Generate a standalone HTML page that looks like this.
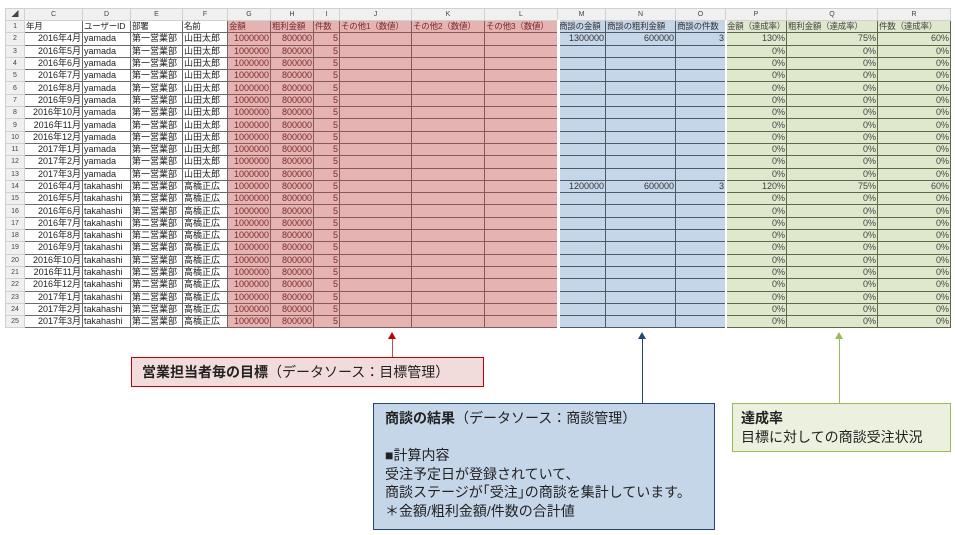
<!DOCTYPE html>
<html><head><meta charset="utf-8"><style>
body{margin:0;width:955px;height:535px;background:#fff;position:relative;overflow:hidden;font-family:"Liberation Sans","Noto Sans CJK JP",sans-serif;}
table{position:absolute;left:5px;top:8px;width:945px;border-collapse:collapse;table-layout:fixed;font-size:9px;}
td{height:11.3px;padding:0 1px;border:1px solid #6a6a6a;white-space:nowrap;overflow:hidden;line-height:11px;color:#222;}
tr.h td{background:#f0f0f0;color:#444;font-size:7px;text-align:center;border-color:#d0d0d0;height:10px;}
tr.t td{font-size:8.5px;letter-spacing:-0.2px}
td.n{background:#f0f0f0;color:#444;font-size:7px !important;text-align:center;border-color:#d0d0d0;}
.r{text-align:right}
.g{background:#e6b3b3;color:#7a2a2a;border-color:#8a5a5a}
.b{background:#c6d6e9;color:#333;border-color:#4a5a6a}
.v{background:#dfe8cd;color:#444;border-color:#5a6a4a}
.box{position:absolute;box-sizing:border-box;font-size:14px;color:#222;}
.ar{position:absolute;width:1px;}
.tri{position:absolute;width:0;height:0;border-left:4px solid transparent;border-right:4px solid transparent;}
</style></head><body>
<table>
<colgroup><col style="width:19px"><col style="width:58px"><col style="width:48px"><col style="width:52px"><col style="width:45px"><col style="width:43px"><col style="width:43px"><col style="width:26px"><col style="width:72px"><col style="width:73px"><col style="width:73px"><col style="width:48px"><col style="width:70px"><col style="width:50px"><col style="width:61px"><col style="width:91px"><col style="width:73px"></colgroup>
<tr class="h"><td>◢</td><td>C</td><td>D</td><td>E</td><td>F</td><td>G</td><td>H</td><td>I</td><td>J</td><td>K</td><td>L</td><td>M</td><td>N</td><td>O</td><td>P</td><td>Q</td><td>R</td></tr>
<tr class="t"><td class="n">1</td><td>年月</td><td>ユーザーID</td><td>部署</td><td>名前</td><td class="g">金額</td><td class="g">粗利金額</td><td class="g">件数</td><td class="g">その他1（数値）</td><td class="g">その他2（数値）</td><td class="g">その他3（数値）</td><td class="b">商談の金額</td><td class="b">商談の粗利金額</td><td class="b">商談の件数</td><td class="v">金額（達成率）</td><td class="v">粗利金額（達成率）</td><td class="v">件数（達成率）</td></tr>
<tr><td class="n">2</td><td class="r">2016年4月</td><td>yamada</td><td>第一営業部</td><td>山田太郎</td><td class="g r">1000000</td><td class="g r">800000</td><td class="g r">5</td><td class="g"></td><td class="g"></td><td class="g"></td><td class="b r">1300000</td><td class="b r">600000</td><td class="b r">3</td><td class="v r">130%</td><td class="v r">75%</td><td class="v r">60%</td></tr>
<tr><td class="n">3</td><td class="r">2016年5月</td><td>yamada</td><td>第一営業部</td><td>山田太郎</td><td class="g r">1000000</td><td class="g r">800000</td><td class="g r">5</td><td class="g"></td><td class="g"></td><td class="g"></td><td class="b"></td><td class="b"></td><td class="b"></td><td class="v r">0%</td><td class="v r">0%</td><td class="v r">0%</td></tr>
<tr><td class="n">4</td><td class="r">2016年6月</td><td>yamada</td><td>第一営業部</td><td>山田太郎</td><td class="g r">1000000</td><td class="g r">800000</td><td class="g r">5</td><td class="g"></td><td class="g"></td><td class="g"></td><td class="b"></td><td class="b"></td><td class="b"></td><td class="v r">0%</td><td class="v r">0%</td><td class="v r">0%</td></tr>
<tr><td class="n">5</td><td class="r">2016年7月</td><td>yamada</td><td>第一営業部</td><td>山田太郎</td><td class="g r">1000000</td><td class="g r">800000</td><td class="g r">5</td><td class="g"></td><td class="g"></td><td class="g"></td><td class="b"></td><td class="b"></td><td class="b"></td><td class="v r">0%</td><td class="v r">0%</td><td class="v r">0%</td></tr>
<tr><td class="n">6</td><td class="r">2016年8月</td><td>yamada</td><td>第一営業部</td><td>山田太郎</td><td class="g r">1000000</td><td class="g r">800000</td><td class="g r">5</td><td class="g"></td><td class="g"></td><td class="g"></td><td class="b"></td><td class="b"></td><td class="b"></td><td class="v r">0%</td><td class="v r">0%</td><td class="v r">0%</td></tr>
<tr><td class="n">7</td><td class="r">2016年9月</td><td>yamada</td><td>第一営業部</td><td>山田太郎</td><td class="g r">1000000</td><td class="g r">800000</td><td class="g r">5</td><td class="g"></td><td class="g"></td><td class="g"></td><td class="b"></td><td class="b"></td><td class="b"></td><td class="v r">0%</td><td class="v r">0%</td><td class="v r">0%</td></tr>
<tr><td class="n">8</td><td class="r">2016年10月</td><td>yamada</td><td>第一営業部</td><td>山田太郎</td><td class="g r">1000000</td><td class="g r">800000</td><td class="g r">5</td><td class="g"></td><td class="g"></td><td class="g"></td><td class="b"></td><td class="b"></td><td class="b"></td><td class="v r">0%</td><td class="v r">0%</td><td class="v r">0%</td></tr>
<tr><td class="n">9</td><td class="r">2016年11月</td><td>yamada</td><td>第一営業部</td><td>山田太郎</td><td class="g r">1000000</td><td class="g r">800000</td><td class="g r">5</td><td class="g"></td><td class="g"></td><td class="g"></td><td class="b"></td><td class="b"></td><td class="b"></td><td class="v r">0%</td><td class="v r">0%</td><td class="v r">0%</td></tr>
<tr><td class="n">10</td><td class="r">2016年12月</td><td>yamada</td><td>第一営業部</td><td>山田太郎</td><td class="g r">1000000</td><td class="g r">800000</td><td class="g r">5</td><td class="g"></td><td class="g"></td><td class="g"></td><td class="b"></td><td class="b"></td><td class="b"></td><td class="v r">0%</td><td class="v r">0%</td><td class="v r">0%</td></tr>
<tr><td class="n">11</td><td class="r">2017年1月</td><td>yamada</td><td>第一営業部</td><td>山田太郎</td><td class="g r">1000000</td><td class="g r">800000</td><td class="g r">5</td><td class="g"></td><td class="g"></td><td class="g"></td><td class="b"></td><td class="b"></td><td class="b"></td><td class="v r">0%</td><td class="v r">0%</td><td class="v r">0%</td></tr>
<tr><td class="n">12</td><td class="r">2017年2月</td><td>yamada</td><td>第一営業部</td><td>山田太郎</td><td class="g r">1000000</td><td class="g r">800000</td><td class="g r">5</td><td class="g"></td><td class="g"></td><td class="g"></td><td class="b"></td><td class="b"></td><td class="b"></td><td class="v r">0%</td><td class="v r">0%</td><td class="v r">0%</td></tr>
<tr><td class="n">13</td><td class="r">2017年3月</td><td>yamada</td><td>第一営業部</td><td>山田太郎</td><td class="g r">1000000</td><td class="g r">800000</td><td class="g r">5</td><td class="g"></td><td class="g"></td><td class="g"></td><td class="b"></td><td class="b"></td><td class="b"></td><td class="v r">0%</td><td class="v r">0%</td><td class="v r">0%</td></tr>
<tr><td class="n">14</td><td class="r">2016年4月</td><td>takahashi</td><td>第二営業部</td><td>高橋正広</td><td class="g r">1000000</td><td class="g r">800000</td><td class="g r">5</td><td class="g"></td><td class="g"></td><td class="g"></td><td class="b r">1200000</td><td class="b r">600000</td><td class="b r">3</td><td class="v r">120%</td><td class="v r">75%</td><td class="v r">60%</td></tr>
<tr><td class="n">15</td><td class="r">2016年5月</td><td>takahashi</td><td>第二営業部</td><td>高橋正広</td><td class="g r">1000000</td><td class="g r">800000</td><td class="g r">5</td><td class="g"></td><td class="g"></td><td class="g"></td><td class="b"></td><td class="b"></td><td class="b"></td><td class="v r">0%</td><td class="v r">0%</td><td class="v r">0%</td></tr>
<tr><td class="n">16</td><td class="r">2016年6月</td><td>takahashi</td><td>第二営業部</td><td>高橋正広</td><td class="g r">1000000</td><td class="g r">800000</td><td class="g r">5</td><td class="g"></td><td class="g"></td><td class="g"></td><td class="b"></td><td class="b"></td><td class="b"></td><td class="v r">0%</td><td class="v r">0%</td><td class="v r">0%</td></tr>
<tr><td class="n">17</td><td class="r">2016年7月</td><td>takahashi</td><td>第二営業部</td><td>高橋正広</td><td class="g r">1000000</td><td class="g r">800000</td><td class="g r">5</td><td class="g"></td><td class="g"></td><td class="g"></td><td class="b"></td><td class="b"></td><td class="b"></td><td class="v r">0%</td><td class="v r">0%</td><td class="v r">0%</td></tr>
<tr><td class="n">18</td><td class="r">2016年8月</td><td>takahashi</td><td>第二営業部</td><td>高橋正広</td><td class="g r">1000000</td><td class="g r">800000</td><td class="g r">5</td><td class="g"></td><td class="g"></td><td class="g"></td><td class="b"></td><td class="b"></td><td class="b"></td><td class="v r">0%</td><td class="v r">0%</td><td class="v r">0%</td></tr>
<tr><td class="n">19</td><td class="r">2016年9月</td><td>takahashi</td><td>第二営業部</td><td>高橋正広</td><td class="g r">1000000</td><td class="g r">800000</td><td class="g r">5</td><td class="g"></td><td class="g"></td><td class="g"></td><td class="b"></td><td class="b"></td><td class="b"></td><td class="v r">0%</td><td class="v r">0%</td><td class="v r">0%</td></tr>
<tr><td class="n">20</td><td class="r">2016年10月</td><td>takahashi</td><td>第二営業部</td><td>高橋正広</td><td class="g r">1000000</td><td class="g r">800000</td><td class="g r">5</td><td class="g"></td><td class="g"></td><td class="g"></td><td class="b"></td><td class="b"></td><td class="b"></td><td class="v r">0%</td><td class="v r">0%</td><td class="v r">0%</td></tr>
<tr><td class="n">21</td><td class="r">2016年11月</td><td>takahashi</td><td>第二営業部</td><td>高橋正広</td><td class="g r">1000000</td><td class="g r">800000</td><td class="g r">5</td><td class="g"></td><td class="g"></td><td class="g"></td><td class="b"></td><td class="b"></td><td class="b"></td><td class="v r">0%</td><td class="v r">0%</td><td class="v r">0%</td></tr>
<tr><td class="n">22</td><td class="r">2016年12月</td><td>takahashi</td><td>第二営業部</td><td>高橋正広</td><td class="g r">1000000</td><td class="g r">800000</td><td class="g r">5</td><td class="g"></td><td class="g"></td><td class="g"></td><td class="b"></td><td class="b"></td><td class="b"></td><td class="v r">0%</td><td class="v r">0%</td><td class="v r">0%</td></tr>
<tr><td class="n">23</td><td class="r">2017年1月</td><td>takahashi</td><td>第二営業部</td><td>高橋正広</td><td class="g r">1000000</td><td class="g r">800000</td><td class="g r">5</td><td class="g"></td><td class="g"></td><td class="g"></td><td class="b"></td><td class="b"></td><td class="b"></td><td class="v r">0%</td><td class="v r">0%</td><td class="v r">0%</td></tr>
<tr><td class="n">24</td><td class="r">2017年2月</td><td>takahashi</td><td>第二営業部</td><td>高橋正広</td><td class="g r">1000000</td><td class="g r">800000</td><td class="g r">5</td><td class="g"></td><td class="g"></td><td class="g"></td><td class="b"></td><td class="b"></td><td class="b"></td><td class="v r">0%</td><td class="v r">0%</td><td class="v r">0%</td></tr>
<tr><td class="n">25</td><td class="r">2017年3月</td><td>takahashi</td><td>第二営業部</td><td>高橋正広</td><td class="g r">1000000</td><td class="g r">800000</td><td class="g r">5</td><td class="g"></td><td class="g"></td><td class="g"></td><td class="b"></td><td class="b"></td><td class="b"></td><td class="v r">0%</td><td class="v r">0%</td><td class="v r">0%</td></tr>
</table>
<div style="position:absolute;left:557px;top:20px;width:3px;height:309px;background:#fff"></div>
<div style="position:absolute;left:725px;top:20px;width:2px;height:309px;background:#fff"></div>

<div class="ar" style="left:392px;top:338px;height:19px;background:#c0504d"></div>
<div class="tri" style="left:388px;top:332px;border-bottom:7px solid #c00000"></div>
<div class="ar" style="left:642px;top:338px;height:65px;background:#1f497d"></div>
<div class="tri" style="left:638px;top:332px;border-bottom:7px solid #1f497d"></div>
<div class="ar" style="left:839px;top:338px;height:65px;background:#9bbb59"></div>
<div class="tri" style="left:835px;top:332px;border-bottom:7px solid #9bbb59"></div>

<div class="box" style="left:131px;top:357px;width:353px;height:30px;background:#f2dcdb;border:1px solid #c00000;padding:5px 0 0 10px;line-height:19px;"><b>営業担当者毎の目標</b>（データソース：目標管理）</div>
<div class="box" style="left:373px;top:403px;width:342px;height:127px;background:#c6d6e9;border:1px solid #1f497d;padding:5px 0 0 11px;line-height:18.5px;"><b>商談の結果</b>（データソース：商談管理）<br><br>■計算内容<br>受注予定日が登録されていて、<br>商談ステージが｢受注｣の商談を集計しています。<br>＊金額/粗利金額/件数の合計値</div>
<div class="box" style="left:732px;top:403px;width:219px;height:49px;background:#ebf1de;border:1px solid #9bbb59;padding:5px 0 0 8px;line-height:18.5px;"><b>達成率</b><br>目標に対しての商談受注状況</div>
</body></html>
